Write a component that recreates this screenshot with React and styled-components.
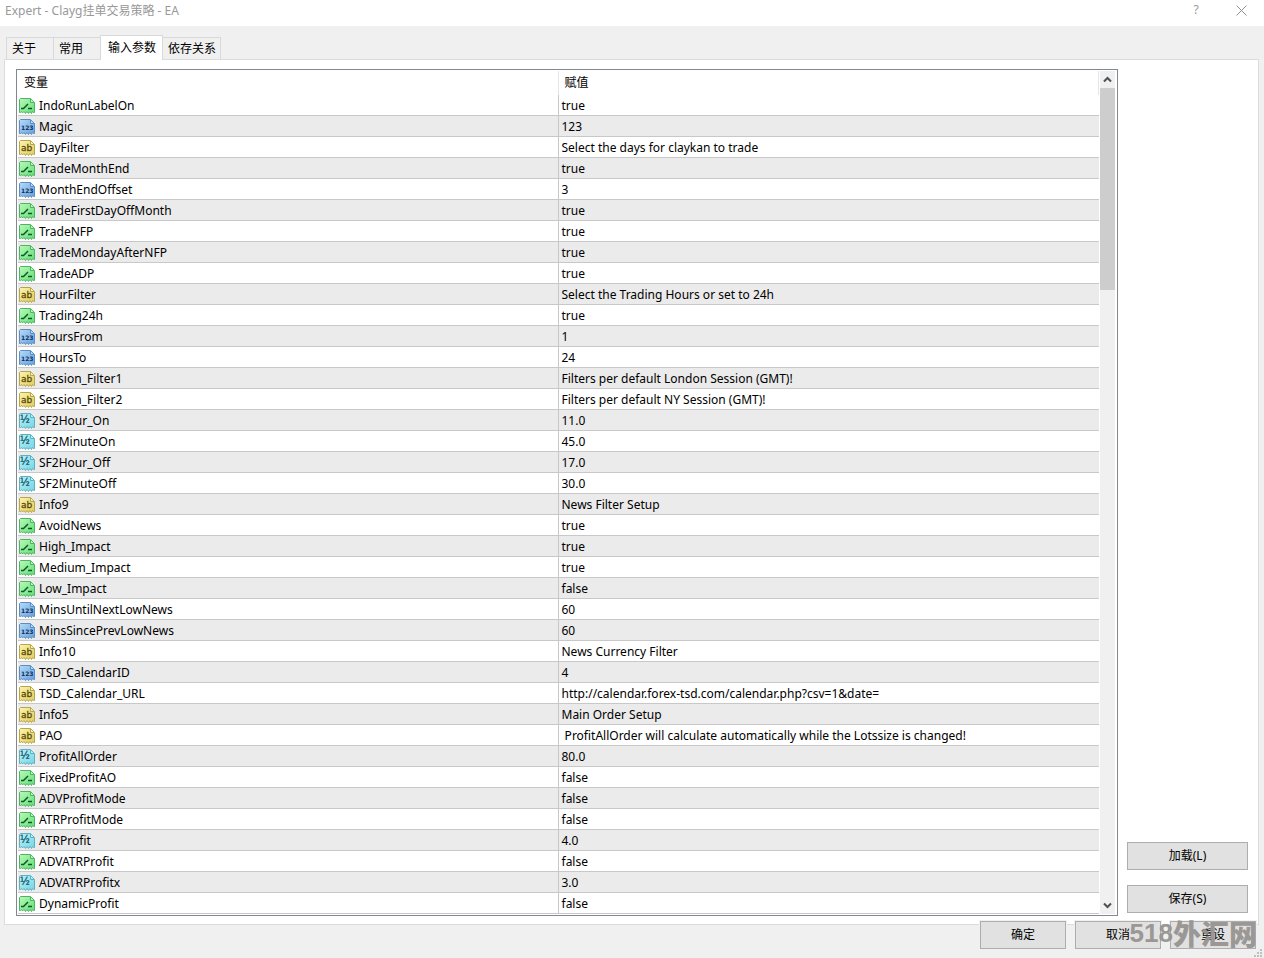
import React, { useState } from "react";
import styled, { createGlobalStyle } from "styled-components";

const GlobalStyle = createGlobalStyle`
  * {
    box-sizing: border-box;
  }

  body {
    margin: 0;
    background: #f0f0f0;
    color: #000;
    font-family: "Noto Sans", "Noto Sans CJK SC", sans-serif;
    font-size: 12px;
    line-height: 20px;
  }

  button {
    margin: 0;
    font: inherit;
    color: inherit;
  }
`;

const Dialog = styled.div`
  display: flex;
  flex-direction: column;
  min-height: 100vh;
  position: relative;
`;

const TitleBar = styled.header`
  display: flex;
  align-items: flex-start;
  justify-content: space-between;
  height: 26px;
  padding: 1px 9px 0 5px;
  background: #fff;
  color: #999;
`;

const Title = styled.h1`
  margin: 0;
  font-size: 12px;
  font-weight: normal;
`;

const TitleActions = styled.div`
  display: flex;
  gap: 17px;
`;

const TitleButton = styled.button`
  display: flex;
  align-items: center;
  justify-content: center;
  width: 28px;
  height: 18px;
  padding: 0;
  border: 0;
  background: none;
`;

const TabList = styled.div`
  display: flex;
  align-items: flex-end;
  height: 33px;
  padding-left: 6px;
`;

const Tab = styled.button`
  position: relative;
  height: 22px;
  padding: 0 ${({ $wide }) => ($wide ? 17 : 4)}px 0 5px;
  border: 1px solid #d9d9d9;
  border-right-width: ${({ $joined }) => ($joined ? 0 : 1)}px;
  border-bottom: 0;
  background: #f0f0f0;

  &[aria-selected="true"] {
    height: 25px;
    margin-bottom: -1px;
    padding: 0 6px 0 7px;
    background: #fff;
    z-index: 1;
  }

  &[aria-selected="true"] + & {
    border-left: 0;
  }
`;

const Panel = styled.main`
  display: flex;
  flex: 1;
  gap: 9px;
  margin: 0 5px 0 4px;
  padding: 9px 10px 8px 11px;
  border: 1px solid #dcdcdc;
  background: #fff;
`;

const ListBox = styled.div`
  display: flex;
  flex: 1;
  gap: 1px;
  padding: 1px;
  border: 1px solid #828790;
`;

const Table = styled.table`
  flex: 1;
  width: 100%;
  table-layout: fixed;
  border-spacing: 0;
`;

const HeadCell = styled.th`
  height: 24px;
  padding: 0 6px;
  border-right: 1px solid #e5e5e5;
  font-weight: normal;
  text-align: left;
`;

const Row = styled.tr`
  background: ${({ $shaded }) => ($shaded ? "#ebebeb" : "#fff")};
`;

const Cell = styled.td`
  height: 21px;
  padding: 2px 3px 0;
  border-bottom: 1px solid #c8c8c8;
  line-height: 18px;
  white-space: pre;
  overflow: hidden;
`;

const NameCell = styled(Cell)`
  padding: 2px 1px 0;
  border-right: 1px solid #c8c8c8;
`;

const Name = styled.div`
  display: flex;
  align-items: center;
  gap: 4px;
  height: 18px;
`;

const ScrollBar = styled.div`
  display: flex;
  flex-direction: column;
  width: 16px;
  padding-right: 1px;
  background: linear-gradient(to right, #f0f0f0 15px, #fff 15px);
`;

const ScrollButton = styled.button`
  display: flex;
  align-items: center;
  justify-content: center;
  height: 17px;
  padding: 0;
  border: 0;
  background: none;
`;

const Track = styled.div`
  flex: 1;
`;

const Thumb = styled.div`
  height: 25%;
  background: #cdcdcd;
`;

const SideActions = styled.div`
  display: flex;
  flex-direction: column;
  justify-content: flex-end;
  gap: 15px;
  width: 121px;
  padding-bottom: 3px;
`;

const Button = styled.button`
  height: 28px;
  padding: 0;
  border: 1px solid #adadad;
  background: #e1e1e1;
`;

const Footer = styled.footer`
  display: flex;
  justify-content: flex-end;
  gap: 9px;
  margin-top: -4px;
  padding: 0 8px 9px;
`;

const FooterButton = styled(Button)`
  width: 86px;
  box-shadow: 0 0 0 1px #f0f0f0;
`;

const Watermark = styled.div`
  position: absolute;
  right: 7px;
  bottom: 5px;
  display: flex;
  align-items: center;
  color: #979391;
  font: 900 28px/40px "Noto Sans CJK SC", sans-serif;
  opacity: 0.94;
  pointer-events: none;
`;

const WatermarkDigits = styled.span`
  font-family: "Liberation Sans", sans-serif;
  font-size: 26px;
  font-weight: bold;
`;

const Grip = styled.svg`
  position: absolute;
  right: 2px;
  bottom: 1px;
`;

const IconText = styled.text`
  font-family: "DejaVu Sans", sans-serif;
  font-size: ${({ $size }) => $size}px;
  font-weight: ${({ $bold }) => ($bold ? "bold" : "normal")};
`;

const iconColors = {
  bool: { from: "#b8f9b8", to: "#63dd78", edge: "#4cb562", ink: "#0d5a20" },
  int: { from: "#b5dbf9", to: "#669fdc", edge: "#5b8fc4", ink: "#0d2f5e" },
  string: { from: "#fbf4b0", to: "#e2cc5e", edge: "#b8a548", ink: "#5a4a08" },
  double: { from: "#b8f3f8", to: "#78d3e4", edge: "#5cb0c0", ink: "#0f5265" },
};

function TypeIcon({ type }) {
  const { from, to, edge, ink } = iconColors[type];
  const id = "fill-" + type;
  return (
    <svg width="16" height="16" viewBox="0 0 16 16" aria-hidden="true">
      <defs>
        <linearGradient id={id} x1="0" y1="0" x2="1" y2="1">
          <stop offset="0" stopColor={from} />
          <stop offset="1" stopColor={to} />
        </linearGradient>
      </defs>
      <path
        d="M.5 1.5 1.5.5H11.5L15.5 4.5V14.5H14.5L13.5 13.5 12.5 15.5 11 13.5 9.5 15.5 8 13.5 6.5 15.5 5 13.5 3.5 15 2.5 13.5 1.5 14.5H.5Z"
        fill={`url(#${id})`}
        stroke={edge}
      />
      <path d="M11.5 1V4.5H15" fill={from} stroke={edge} />
      {type === "bool" && (
        <path
          d="M2 10.5H4.5L9 6M9 10.5H13"
          fill="none"
          stroke={ink}
          strokeWidth="1.5"
        />
      )}
      {type === "int" && (
        <IconText $size={6} $bold x="2" y="11" fill={ink}>
          123
        </IconText>
      )}
      {type === "string" && (
        <IconText $size={9} x="2" y="11" fill={ink} stroke={ink} strokeWidth=".3">
          ab
        </IconText>
      )}
      {type === "double" && (
        <IconText $size={10} x="1" y="10" fill={ink} stroke={ink} strokeWidth=".3">
          ½
        </IconText>
      )}
    </svg>
  );
}

const tabs = [
  { label: "关于", wide: true, joined: true },
  { label: "常用", wide: true, joined: true },
  { label: "输入参数" },
  { label: "依存关系" },
];

const params = [
  ["bool", "IndoRunLabelOn", "true"],
  ["int", "Magic", "123"],
  ["string", "DayFilter", "Select the days for claykan to trade"],
  ["bool", "TradeMonthEnd", "true"],
  ["int", "MonthEndOffset", "3"],
  ["bool", "TradeFirstDayOffMonth", "true"],
  ["bool", "TradeNFP", "true"],
  ["bool", "TradeMondayAfterNFP", "true"],
  ["bool", "TradeADP", "true"],
  ["string", "HourFilter", "Select the Trading Hours or set to 24h"],
  ["bool", "Trading24h", "true"],
  ["int", "HoursFrom", "1"],
  ["int", "HoursTo", "24"],
  ["string", "Session_Filter1", "Filters per default London Session (GMT)!"],
  ["string", "Session_Filter2", "Filters per default NY Session (GMT)!"],
  ["double", "SF2Hour_On", "11.0"],
  ["double", "SF2MinuteOn", "45.0"],
  ["double", "SF2Hour_Off", "17.0"],
  ["double", "SF2MinuteOff", "30.0"],
  ["string", "Info9", "News Filter Setup"],
  ["bool", "AvoidNews", "true"],
  ["bool", "High_Impact", "true"],
  ["bool", "Medium_Impact", "true"],
  ["bool", "Low_Impact", "false"],
  ["int", "MinsUntilNextLowNews", "60"],
  ["int", "MinsSincePrevLowNews", "60"],
  ["string", "Info10", "News Currency Filter"],
  ["int", "TSD_CalendarID", "4"],
  [
    "string",
    "TSD_Calendar_URL",
    "http://calendar.forex-tsd.com/calendar.php?csv=1&date=",
  ],
  ["string", "Info5", "Main Order Setup"],
  [
    "string",
    "PAO",
    " ProfitAllOrder will calculate automatically while the Lotssize is changed!",
  ],
  ["double", "ProfitAllOrder", "80.0"],
  ["bool", "FixedProfitAO", "false"],
  ["bool", "ADVProfitMode", "false"],
  ["bool", "ATRProfitMode", "false"],
  ["double", "ATRProfit", "4.0"],
  ["bool", "ADVATRProfit", "false"],
  ["double", "ADVATRProfitx", "3.0"],
  ["bool", "DynamicProfit", "false"],
];

export default function App() {
  const [active, setActive] = useState(2);

  return (
    <Dialog>
      <GlobalStyle />
      <TitleBar>
        <Title>Expert - Clayg挂单交易策略 - EA</Title>
        <TitleActions>
          <TitleButton aria-label="Help">?</TitleButton>
          <TitleButton aria-label="Close">
            <svg width="11" height="11" viewBox="0 0 11 11">
              <path d="M.5.5 10.5 10.5M10.5.5.5 10.5" stroke="#8f8f8f" />
            </svg>
          </TitleButton>
        </TitleActions>
      </TitleBar>
      <TabList role="tablist">
        {tabs.map(({ label, wide, joined }, i) => (
          <Tab
            key={label}
            role="tab"
            aria-selected={i === active}
            $wide={wide}
            $joined={joined}
            onClick={() => setActive(i)}
          >
            {label}
          </Tab>
        ))}
      </TabList>
      <Panel>
        <ListBox>
          <Table>
            <thead>
              <tr>
                <HeadCell scope="col">变量</HeadCell>
                <HeadCell scope="col">赋值</HeadCell>
              </tr>
            </thead>
            <tbody>
              {params.map(([type, name, value], i) => (
                <Row key={name} $shaded={i % 2 === 1}>
                  <NameCell>
                    <Name>
                      <TypeIcon type={type} />
                      {name}
                    </Name>
                  </NameCell>
                  <Cell>{value}</Cell>
                </Row>
              ))}
            </tbody>
          </Table>
          <ScrollBar>
            <ScrollButton aria-label="Scroll up">
              <svg width="9" height="7" viewBox="0 0 9 7">
                <path d="M1 5.5 4.5 2 8 5.5" fill="none" stroke="#505050" strokeWidth="2" />
              </svg>
            </ScrollButton>
            <Track>
              <Thumb />
            </Track>
            <ScrollButton aria-label="Scroll down">
              <svg width="9" height="7" viewBox="0 0 9 7">
                <path d="M1 1.5 4.5 5 8 1.5" fill="none" stroke="#505050" strokeWidth="2" />
              </svg>
            </ScrollButton>
          </ScrollBar>
        </ListBox>
        <SideActions>
          <Button>加载(L)</Button>
          <Button>保存(S)</Button>
        </SideActions>
      </Panel>
      <Footer>
        <FooterButton>确定</FooterButton>
        <FooterButton>取消</FooterButton>
        <FooterButton>重设</FooterButton>
      </Footer>
      <Watermark>
        <WatermarkDigits>518</WatermarkDigits>外汇网
      </Watermark>
      <Grip width="8" height="8" viewBox="0 0 8 8" fill="#bfbfbf" aria-hidden="true">
        <path d="M6 0h2v2H6zM3 3h2v2H3zM6 3h2v2H6zM0 6h2v2H0zM3 6h2v2H3zM6 6h2v2H6z" />
      </Grip>
    </Dialog>
  );
}
